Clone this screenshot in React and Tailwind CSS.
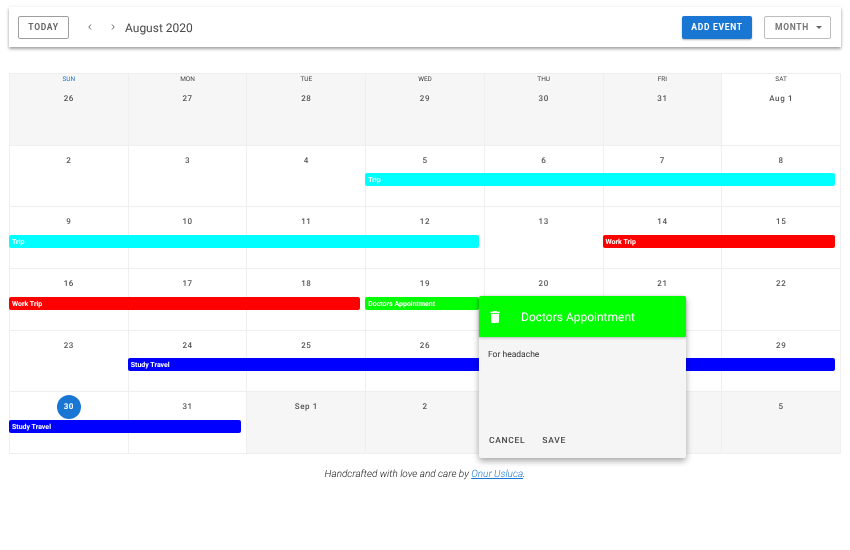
const headers = ["SUN", "MON", "TUE", "WED", "THU", "FRI", "SAT"]
const dayCols = ["col-start-1", "col-start-2", "col-start-3", "col-start-4", "col-start-5", "col-start-6", "col-start-7"]

const weeks = [
  {
    days: [["26", 1], ["27", 1], ["28", 1], ["29", 1], ["30", 1], ["31", 1], ["Aug 1", 0]],
    events: [],
  },
  {
    days: [["2"], ["3"], ["4"], ["5"], ["6"], ["7"], ["8"]],
    events: [{ name: "Trip", color: "bg-[#00ffff]", start: "col-start-4", span: "col-span-4" }],
  },
  {
    days: [["9"], ["10"], ["11"], ["12"], ["13"], ["14"], ["15"]],
    events: [
      { name: "Trip", color: "bg-[#00ffff]", start: "col-start-1", span: "col-span-4" },
      { name: "Work Trip", color: "bg-[#ff0000]", start: "col-start-6", span: "col-span-2" },
    ],
  },
  {
    days: [["16"], ["17"], ["18"], ["19"], ["20"], ["21"], ["22"]],
    events: [
      { name: "Work Trip", color: "bg-[#ff0000]", start: "col-start-1", span: "col-span-3" },
      { name: "Doctors Appointment", color: "bg-[#00ff00]", start: "col-start-4", span: "col-span-1" },
    ],
  },
  {
    days: [["23"], ["24"], ["25"], ["26"], ["27"], ["28"], ["29"]],
    events: [{ name: "Study Travel", color: "bg-[#0000ff]", start: "col-start-2", span: "col-span-6" }],
  },
  {
    days: [["30", 0, true], ["31"], ["Sep 1", 1], ["2", 1], ["3", 1], ["4", 1], ["5", 1]],
    events: [{ name: "Study Travel", color: "bg-[#0000ff]", start: "col-start-1", span: "col-span-2" }],
  },
]

function Week({ week }) {
  return (
    <div className="grid grid-cols-7 grid-rows-[27.5px_13px_1fr] h-[61.7px] border-b border-[#efefef]">
      {week.days.map(([label, outside, today], i) => (
        <div
          key={i}
          className={`row-start-1 row-span-3 border-r border-[#efefef] flex justify-center ${dayCols[i]} ${outside ? "bg-[#f6f6f6]" : ""}`}
        >
          {today ? (
            <span className="mt-[3px] w-6 h-6 rounded-full bg-[#1976d2] text-white font-bold text-[8px] tracking-[0.5px] flex items-center justify-center">
              {label}
            </span>
          ) : (
            <span className="mt-[9px] h-3 leading-3 text-[8px] font-medium tracking-[0.6px] text-[#555]">{label}</span>
          )}
        </div>
      ))}
      {week.events.map((ev, i) => (
        <div
          key={i}
          className={`row-start-2 ${ev.start} ${ev.span} -ml-px mr-[6px] ${ev.color} z-10 rounded-[2px] text-white text-[7px] font-bold leading-[14px] pl-[3px] overflow-hidden whitespace-nowrap`}
        >
          {ev.name}
        </div>
      ))}
    </div>
  )
}

export default function App() {
  return (
    <div className="relative w-[850px] h-[550px] overflow-hidden will-change-transform font-['Roboto',sans-serif] [text-rendering:geometricPrecision]">
      <div className="mx-[9px] mt-[7px] h-10 pl-[9px] pr-[10px] flex items-center bg-white shadow-[0_2px_3px_rgba(0,0,0,0.35),0_0_4px_rgba(0,0,0,0.08)]">
        <button className="w-[51px] h-[23px] rounded-[2px] border border-[#9e9e9e] text-[#666] text-[8.5px] font-bold tracking-[0.7px]">
          TODAY
        </button>
        <svg className="ml-[17px] w-2 h-2 text-[#666]" viewBox="0 0 8 8" fill="none" stroke="currentColor" strokeWidth="1">
          <path d="M5 1.5 2.8 4 5 6.5" />
        </svg>
        <svg className="ml-[15px] w-2 h-2 text-[#666]" viewBox="0 0 8 8" fill="none" stroke="currentColor" strokeWidth="1">
          <path d="M3 1.5 5.2 4 3 6.5" />
        </svg>
        <div className="ml-[8px] mt-px text-[12px] text-[#4a4a4a] leading-4">August 2020</div>
        <div className="flex-1" />
        <button className="w-[70px] h-[23px] rounded-[2px] bg-[#1976d2] text-white text-[8.5px] font-bold tracking-[0.7px] shadow-[0_1px_2px_rgba(0,0,0,0.3)]">
          ADD EVENT
        </button>
        <button className="ml-3 w-[67px] h-[23px] rounded-[2px] border border-[#bdbdbd] text-[#757575] text-[8.5px] font-bold tracking-[0.7px] flex items-center justify-between pl-[10px] pr-[8px]">
          MONTH
          <span className="w-0 h-0 border-x-[3.5px] border-x-transparent border-t-[3.5px] border-t-[#666]" />
        </button>
      </div>

      <div className="mx-[9px] mt-[26px] border-t border-l border-[#efefef]">
        <div className="grid grid-cols-7 h-[10px]">
          {headers.map((h, i) => (
            <div
              key={h}
              className={`text-center text-[6.5px] leading-[11px] border-r border-[#efefef] ${i === 0 ? "text-[#1976d2]" : "text-[#444]"} ${i === 6 ? "bg-white" : "bg-[#f6f6f6]"}`}
            >
              {h}
            </div>
          ))}
        </div>
        {weeks.map((w, i) => (
          <Week key={i} week={w} />
        ))}
      </div>

      <p className="mt-[14px] text-center text-[10px] italic font-light text-[#111] leading-[14px]">
        Handcrafted with love and care by <a className="text-[#1976d2] underline">Onur Usluca</a>.
      </p>

      <div className="absolute left-[479px] top-[296px] w-[207px] h-[162px] bg-[#f5f5f5] rounded-[2px] z-20 shadow-[0_3px_6px_rgba(0,0,0,0.35)] flex flex-col">
        <div className="h-[41px] bg-[#00ff00] flex items-center rounded-t-[2px] pl-[8px] shadow-[0_1px_3px_rgba(0,0,0,0.25)]">
          <svg className="w-4 h-4 text-white" viewBox="0 0 24 24" fill="currentColor">
            <path d="M19,4H15.5L14.5,3H9.5L8.5,4H5V6H19M6,19A2,2 0 0,0 8,21H16A2,2 0 0,0 18,19V7H6V19Z" />
          </svg>
          <span className="ml-[18px] mt-px text-white text-[12px] leading-4">Doctors Appointment</span>
        </div>
        <div className="flex-1 px-[9px] pt-[12px] text-[8.5px] leading-3 text-[#333]">For headache</div>
        <div className="flex gap-[17px] pl-[10px] pb-[11px] text-[8.5px] font-medium tracking-[0.7px] text-[#444] leading-3">
          <span>CANCEL</span>
          <span>SAVE</span>
        </div>
      </div>
    </div>
  )
}
